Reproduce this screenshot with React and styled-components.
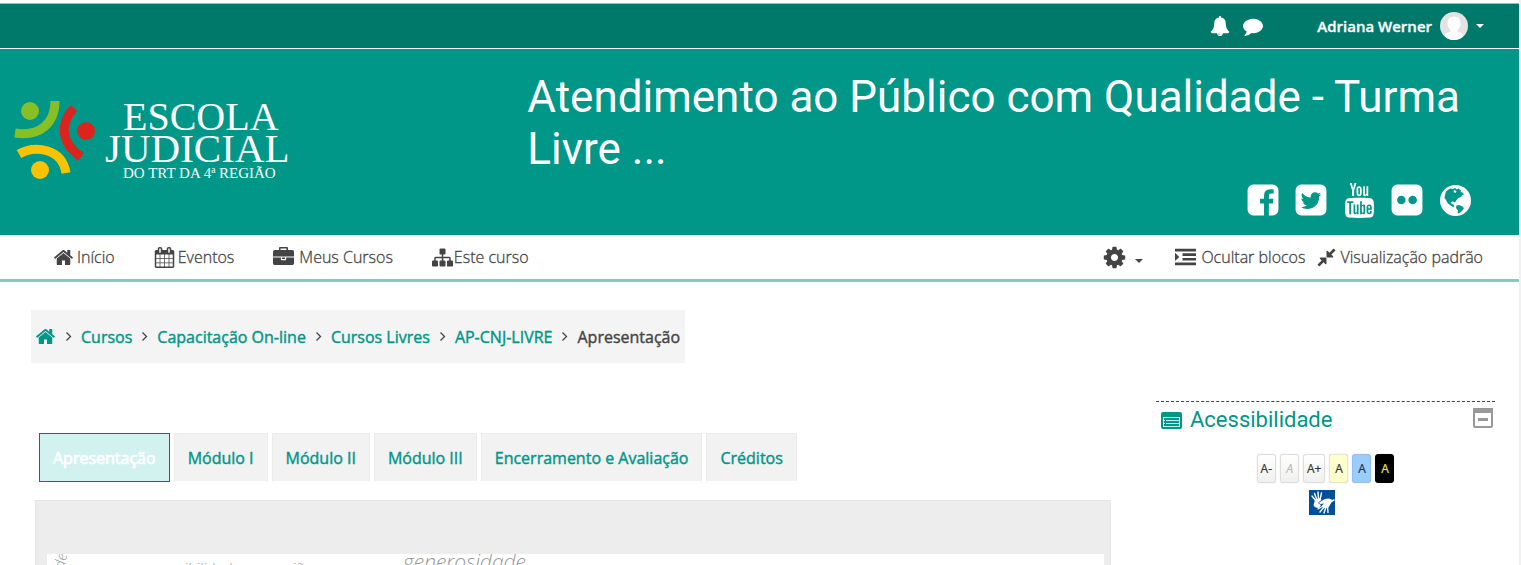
import React from "react";
import styled, { createGlobalStyle } from "styled-components";
import { TfiYoutube } from "react-icons/tfi";

const GlobalStyle = createGlobalStyle`
  * {
    box-sizing: border-box;
  }

  body {
    margin: 0;
    background: #fff;
    color: #444;
    font-family: "Open Sans", sans-serif;
    font-size: 16px;
    overflow: hidden;
  }

  a {
    color: inherit;
    text-decoration: none;
  }

  button {
    border: 0;
    padding: 0;
    background: none;
    color: inherit;
    font: inherit;
    cursor: pointer;
  }
`;

const icons = {
  bell:
    "M912 1696q0-16-16-16-59 0-101.5-42.5t-42.5-101.5q0-16-16-16t-16 16q0 73 51.5 124.5t124.5 51.5q16 0 16-16zm816-288q0 52-38 90t-90 38h-448q0 106-75 181t-181 75-181-75-75-181h-448q-52 0-90-38t-38-90q50-42 91-88t85-119.5 74.5-158.5 50-206 19.5-260q0-152 117-282.5t307-158.5q-8-19-8-39 0-40 28-68t68-28 68 28 28 68q0 20-8 39 190 28 307 158.5t117 282.5q0 139 19.5 260t50 206 74.5 158.5 85 119.5 91 88z",
  comment:
    "M1792 896q0 174-120 321.5t-326 233-450 85.5q-70 0-145-8-198 175-460 242-49 14-114 22-17 2-30.5-9t-17.5-29v-1q-3-4-.5-12t2-10 4.500-9.500l6-9 7-8.500 8-9q7-8 31-34.500t34.500-38 31-39.500 32.500-51 27-59 26-76q-157-89-247.500-220t-90.500-281q0-130 71-248.500t191-204.500 286-136.500 348-50.500q244 0 450 85.500t326 233 120 321.500z",
  facebook:
    "M1376 128q119 0 203.500 84.500t84.500 203.500v960q0 119-84.500 203.500t-203.500 84.500h-188v-595h199l30-232h-229v-148q0-56 23.500-84t91.500-28l122-1v-207q-63-9-178-9-136 0-217.500 80t-81.500 226v171h-200v232h200v595h-532q-119 0-203.500-84.500t-84.500-203.500v-960q0-119 84.500-203.500t203.500-84.500h960z",
  twitter:
    "M1408 610q-56 25-121 34 68-40 93-117-65 38-134 51-61-66-153-66-87 0-148.500 61.500t-61.500 148.500q0 29 5 48-129-7-242-65t-192-155q-29 50-29 106 0 114 91 175-47-1-100-26v2q0 75 50 133.500t123 72.500q-29 8-51 8-13 0-39-4 21 63 74.500 104t121.500 42q-116 90-261 90-26 0-50-3 148 94 322 94 112 0 210-35.500t168-95 120.500-137 75-162 24.500-168.500q0-18-1-27 63-45 105-109zm256-194v960q0 119-84.500 203.500t-203.500 84.500h-960q-119 0-203.500-84.500t-84.500-203.500v-960q0-119 84.500-203.500t203.500-84.500h960q119 0 203.500 84.500t84.500 203.500z",
  flickr:
    "M1376 128q119 0 203.500 84.500t84.500 203.500v960q0 119-84.500 203.500t-203.500 84.500h-960q-119 0-203.500-84.500t-84.500-203.500v-960q0-119 84.500-203.500t203.500-84.500h960zm-550 768q0-88-62-150t-150-62-150 62-62 150 62 150 150 62 150-62 62-150zm564 0q0-88-62-150t-150-62-150 62-62 150 62 150 150 62 150-62 62-150z",
  home:
    "M1472 992v480q0 26-19 45t-45 19h-384v-384h-256v384h-384q-26 0-45-19t-19-45v-480q0-1 .5-3t.5-3l575-474 575 474q1 2 1 6zm223-69l-62 74q-8 9-21 11h-3q-13 0-21-7l-692-577-692 577q-12 8-24 7-13-2-21-11l-62-74q-8-10-7-23.500t11-21.500l719-599q32-26 76-26t76 26l244 204v-195q0-14 9-23t23-9h192q14 0 23 9t9 23v408l219 182q10 8 11 21.500t-7 23.500z",
  calendar:
    "M192 1664h288v-288h-288v288zm352 0h320v-288h-320v288zm-352-352h288v-320h-288v320zm352 0h320v-320h-320v320zm-352-384h288v-288h-288v288zm736 736h320v-288h-320v288zm-384-736h320v-288h-320v288zm768 736h288v-288h-288v288zm-384-352h320v-320h-320v320zm-352-864v-288q0-13-9.500-22.500t-22.500-9.500h-64q-13 0-22.500 9.500t-9.500 22.500v288q0 13 9.500 22.500t22.500 9.500h64q13 0 22.500-9.500t9.500-22.500zm736 864h288v-320h-288v320zm-384-384h320v-288h-320v288zm384 0h288v-288h-288v288zm32-480v-288q0-13-9.500-22.500t-22.500-9.500h-64q-13 0-22.500 9.500t-9.500 22.500v288q0 13 9.500 22.500t22.500 9.500h64q13 0 22.500-9.500t9.500-22.500zm384-64v1280q0 52-38 90t-90 38h-1408q-52 0-90-38t-38-90v-1280q0-52 38-90t90-38h128v-96q0-66 47-113t113-47h64q66 0 113 47t47 113v96h384v-96q0-66 47-113t113-47h64q66 0 113 47t47 113v96h128q52 0 90 38t38 90z",
  briefcase:
    "M640 256h512v-128h-512v128zm1152 640v480q0 66-47 113t-113 47h-1472q-66 0-113-47t-47-113v-480h672v160q0 26 19 45t45 19h320q26 0 45-19t19-45v-160h672zm-768 0v128h-256v-128h256zm768-480v384h-1792v-384q0-66 47-113t113-47h352v-160q0-40 28-68t68-28h576q40 0 68 28t28 68v160h352q66 0 113 47t47 113z",
  sitemap:
    "M1792 1248v320q0 40-28 68t-68 28h-320q-40 0-68-28t-28-68v-320q0-40 28-68t68-28h96v-192h-512v192h96q40 0 68 28t28 68v320q0 40-28 68t-68 28h-320q-40 0-68-28t-28-68v-320q0-40 28-68t68-28h96v-192h-512v192h96q40 0 68 28t28 68v320q0 40-28 68t-68 28h-320q-40 0-68-28t-28-68v-320q0-40 28-68t68-28h96v-192q0-52 38-90t90-38h512v-192h-96q-40 0-68-28t-28-68v-320q0-40 28-68t68-28h320q40 0 68 28t28 68v320q0 40-28 68t-68 28h-96v192h512q52 0 90 38t38 90v192h96q40 0 68 28t28 68z",
  cog:
    "M1152 896q0-106-75-181t-181-75-181 75-75 181 75 181 181 75 181-75 75-181zm512-109v222q0 12-8 23t-20 13l-185 28q-19 54-39 91 35 50 107 138 10 12 10 25t-9 23q-27 37-99 108t-94 71q-12 0-26-9l-138-108q-44 23-91 38-16 136-29 186-7 28-36 28h-222q-14 0-24.500-8.500t-11.500-21.500l-28-184q-49-16-90-37l-141 107q-10 9-25 9-14 0-25-11-126-114-165-168-7-10-7-23 0-12 8-23 15-21 51-66.500t54-70.500q-27-50-41-99l-183-27q-13-2-21-12.500t-8-23.500v-222q0-12 8-23t19-13l186-28q14-46 39-92-40-57-107-138-10-12-10-24 0-10 9-23 26-36 98.500-107.500t94.500-71.500q13 0 26 10l138 107q44-23 91-38 16-136 29-186 7-28 36-28h222q14 0 24.500 8.500t11.500 21.500l28 184q49 16 90 37l142-107q9-9 24-9 13 0 25 10 129 119 165 170 7 8 7 22 0 12-8 23-15 21-51 66.500t-54 70.500q26 50 41 98l183 28q13 2 21 12.500t8 23.500z",
  indent:
    "M0 150h1792v230h-1792zM640 540h1152v230h-1152zM640 930h1152v230h-1152zM0 1320h1792v230h-1792zM0 500l370 350-370 350z",
  compress:
    "M896 960v448q0 26-19 45t-45 19-45-19l-144-144-332 332q-10 10-23 10t-23-10l-114-114q-10-10-10-23t10-23l332-332-144-144q-19-19-19-45t19-45 45-19h448q26 0 45 19t19 45zm755-672q0 13-10 23l-332 332 144 144q19 19 19 45t-19 45-45 19h-448q-26 0-45-19t-19-45v-448q0-26 19-45t45-19 45 19l144 144 332-332q10-10 23-10t23 10l114 114q10 10 10 23z"
};

const Svg = styled.svg`
  width: ${props => props.$size}px;
  height: ${props => props.$size}px;
  flex: none;
  display: block;
  fill: currentColor;
`;

const Icon = ({ name, size = 21 }) => (
  <Svg $size={size} viewBox="0 0 1792 1792" aria-hidden="true">
    <path d={icons[name]} />
  </Svg>
);

const Globe = () => (
  <Svg $size={31} viewBox="0 0 31 31" aria-hidden="true">
    <circle cx="15.500" cy="15.500" r="15.500" />
    <path
      fill="#009688"
      d="M6 6.500l4-3 3 .5 2-1 2 1.500 1.500-1 2.500 2-.5 1.500 2 .5 1.500 2-2 .5-1 2-2.500 1-2 2-1.500 2.500-2-1-2 .5.500 2 2 .5 1 2-1.500.5-3-2-2.500-2-1.500-3-1.500-2 .5-3zM16.500 20.500l2.500-.5 3.500 1.500 1.500 1.500-1.500 2.500-3 2.500-2 .5.500-3-2-2.500z"
    />
    <path d="M14 5l2.500 1-1 2-2-1z" />
  </Svg>
);

const Caret = styled.span`
  border: 4px solid transparent;
  border-top-color: currentColor;
  border-bottom: 0;
`;

const Page = styled.div`
  min-height: 100vh;
  padding-top: 3px;
  border-right: 2px solid #f1f1f1;
`;

const TopBar = styled.div`
  height: 46px;
  display: flex;
  justify-content: flex-end;
  align-items: center;
  padding-right: 35px;
  background: #00796b;
  border-top: 1px solid #a9b5b3;
  border-bottom: 1px solid #fff;
  color: #fff;
`;

const Notices = styled.div`
  display: flex;
  align-items: center;
  gap: 13px;
  margin-right: 54px;
`;

const UserMenu = styled.button`
  display: flex;
  align-items: center;
  gap: 8px;
  font-size: 15px;
  font-weight: 600;
  -webkit-text-stroke: 0.3px currentColor;
`;

const Avatar = styled.svg`
  width: 28px;
  height: 28px;
  border-radius: 50%;
  background: #e3e3e3;
`;

const Header = styled.header`
  display: grid;
  grid-template-columns: 1fr 2fr;
  column-gap: 24px;
  padding: 22px 15px 17px;
  background: #009688;
  color: #fff;
`;

const Logo = styled.svg`
  display: block;
  width: 276px;
  height: 84px;
  margin-top: 29px;
  overflow: visible;
  fill: #fff;
  font-family: "Liberation Serif", serif;
`;

const Title = styled.h1`
  margin: 0;
  font-family: Roboto, sans-serif;
  font-size: 44px;
  font-weight: 400;
  line-height: 52px;
`;

const Social = styled.div`
  display: flex;
  justify-content: flex-end;
  align-items: center;
  gap: 12px;
  margin-top: 7px;
  padding-right: 31px;

  a {
    width: 36px;
    height: 36px;
    display: flex;
    align-items: center;
    justify-content: center;
  }
`;

const NavBar = styled.nav`
  height: 47px;
  display: flex;
  align-items: center;
  padding: 0 36px 0 53px;
  border-bottom: 3px solid #80cbc4;
  font-weight: 300;
  -webkit-text-stroke: 0.3px currentColor;
`;

const NavLink = styled.a`
  display: flex;
  align-items: center;
  gap: ${props => props.$gap || 3}px;
  margin-right: ${props => props.$space || 0}px;
`;

const Settings = styled.button`
  display: flex;
  align-items: center;
  gap: 8px;
  margin: 0 32px 0 auto;

  ${Caret} {
    margin-top: 8px;
  }
`;

const Breadcrumb = styled.nav`
  width: fit-content;
  height: 53px;
  display: flex;
  align-items: center;
  gap: 9px;
  margin: 28px 0 0 31px;
  padding: 0 5px 0 4px;
  background: #f4f4f4;
  -webkit-text-stroke: 0.4px currentColor;

  a {
    color: #009688;
  }
`;

const Chevron = styled.svg`
  width: 7px;
  height: 9px;
  fill: none;
  stroke: #444;
  stroke-width: 1.3;
`;

const Content = styled.div`
  display: grid;
  grid-template-columns: minmax(0, 1fr) 339px;
  column-gap: 45px;
  margin-top: 38px;
  padding: 0 24px 0 35px;
`;

const Tabs = styled.div`
  display: flex;
  gap: 4px;
  margin: 32px 0 0 4px;
`;

const Tab = styled.a`
  height: 49px;
  padding: 0 13px;
  line-height: 49px;
  -webkit-text-stroke: ${props => (props.$active ? 0.7 : 0.4)}px currentColor;
  color: ${props => (props.$active ? "#fff" : "#009688")};
  background: ${props => (props.$active ? "#d2f2ef" : "#f2f2f2")};
  border: 1px solid ${props => (props.$active ? "#00796b" : "#ececec")};
  border-bottom-color: ${props => (props.$active ? "#00796b" : "#fff")};
`;

const Panel = styled.section`
  margin-top: 18px;
  padding: 53px 6px 0 11px;
  background: #ededed;
  border: 1px solid #e6e6e6;
`;

const Banner = styled.svg`
  display: block;
  width: 100%;
  height: 240px;
  background: #fff;
  fill: #999;
  font-family: "Open Sans", sans-serif;
  font-style: italic;
  font-weight: 300;
`;

const Block = styled.aside`
  border-top: 1px dashed #444;
`;

const BlockHeader = styled.div`
  display: flex;
  align-items: center;
  gap: 8px;
  height: 36px;
  padding: 0 2px 0 5px;
  color: #009688;

  h2 {
    flex: 1;
    margin: 0;
    font: 400 22px/36px Roboto, sans-serif;
  }

  button {
    color: #999;
  }
`;

const Sizes = styled.div`
  display: flex;
  justify-content: center;
  gap: 4px;
  margin: 16px 0 7px;
`;

const SizeButton = styled.button`
  height: 29px;
  min-width: 19px;
  padding: 0 3px;
  border: 1px solid ${props => props.$border || "#ddd"};
  border-radius: 3px;
  background: ${props => props.$bg || "linear-gradient(#fff, #f0f0ee)"};
  color: ${props => props.$color || "#333"};
  font-size: 12px;
  font-style: ${props => (props.disabled ? "italic" : "normal")};
  -webkit-text-stroke: 0.2px currentColor;
  box-shadow: 0 0 1px rgba(0, 0, 0, 0.25);
`;

const Hands = styled.button`
  display: block;
  margin: 0 auto;
  padding-right: 8px;
`;

const crumbs = ["Cursos", "Capacitação On-line", "Cursos Livres", "AP-CNJ-LIVRE"];

const tabs = [
  "Apresentação",
  "Módulo I",
  "Módulo II",
  "Módulo III",
  "Encerramento e Avaliação",
  "Créditos"
];

const Separator = () => (
  <Chevron viewBox="0 0 7 9" aria-hidden="true">
    <path d="M1.500 .5l4 4-4 4" />
  </Chevron>
);

const App = () => (
  <>
    <GlobalStyle />
    <Page>
      <TopBar>
        <Notices>
          <button aria-label="Notificações">
            <Icon name="bell" size={20} />
          </button>
          <button aria-label="Mensagens">
            <Icon name="comment" size={20} />
          </button>
        </Notices>
        <UserMenu>
          Adriana Werner
          <Avatar viewBox="0 0 28 28" aria-hidden="true">
            <path
              fill="#fff"
              d="M14 4.500c4 0 6.500 2.800 6.500 6.500 0 3-1.200 5.500-3 6.900v1.600c2 .8 5 1.700 6 3.500L21 28H7l-2.500-5c1-1.800 4-2.700 6-3.500v-1.600c-1.800-1.400-3-3.900-3-6.900 0-3.700 2.500-6.500 6.500-6.500z"
            />
          </Avatar>
          <Caret />
        </UserMenu>
      </TopBar>

      <Header>
        <a href="#inicio" aria-label="Escola Judicial do TRT da 4ª Região">
          <Logo viewBox="0 0 276 84">
            <g fill="none" strokeWidth="9">
              <path stroke="#86bf26" d="M40 1c0 22-15 36-40 32" />
              <path stroke="#dc241f" d="M59 8c-14 15-14 34 7 49" />
              <path stroke="#f9c300" d="M4 54c16-9 43-6 47 19" />
            </g>
            <circle fill="#86bf26" cx="15" cy="11" r="9" />
            <circle fill="#dc241f" cx="71" cy="31" r="9" />
            <circle fill="#f9c300" cx="25" cy="70" r="9" />
            <text x="108" y="30" fontSize="40">
              ESCOLA
            </text>
            <text x="90" y="62" fontSize="41">
              JUDICIAL
            </text>
            <text x="108" y="78" fontSize="15">
              DO TRT DA 4ª REGIÃO
            </text>
          </Logo>
        </a>
        <div>
          <Title>Atendimento ao Público com Qualidade - Turma Livre ...</Title>
          <Social>
            <a href="#facebook" aria-label="Facebook">
              <Icon name="facebook" size={36} />
            </a>
            <a href="#twitter" aria-label="Twitter">
              <Icon name="twitter" size={36} />
            </a>
            <a href="#youtube" aria-label="YouTube">
              <TfiYoutube size={35} />
            </a>
            <a href="#flickr" aria-label="Flickr">
              <Icon name="flickr" size={36} />
            </a>
            <a href="#site" aria-label="Site">
              <Globe />
            </a>
          </Social>
        </div>
      </Header>

      <NavBar>
        <NavLink href="#inicio" $space={39}>
          <Icon name="home" />
          Início
        </NavLink>
        <NavLink href="#eventos" $space={39}>
          <Icon name="calendar" />
          Eventos
        </NavLink>
        <NavLink href="#cursos" $gap={5} $space={39}>
          <Icon name="briefcase" />
          Meus Cursos
        </NavLink>
        <NavLink href="#curso" $gap={1}>
          <Icon name="sitemap" />
          Este curso
        </NavLink>
        <Settings aria-label="Configurações">
          <Icon name="cog" size={25} />
          <Caret />
        </Settings>
        <NavLink href="#blocos" $gap={5} $space={11}>
          <Icon name="indent" />
          Ocultar blocos
        </NavLink>
        <NavLink href="#padrao">
          <Icon name="compress" />
          Visualização padrão
        </NavLink>
      </NavBar>

      <Breadcrumb aria-label="Navegação">
        <a href="#inicio" aria-label="Início">
          <Icon name="home" />
        </a>
        {crumbs.map(crumb => (
          <React.Fragment key={crumb}>
            <Separator />
            <a href="#curso">{crumb}</a>
          </React.Fragment>
        ))}
        <Separator />
        <span>Apresentação</span>
      </Breadcrumb>

      <Content>
        <main>
          <Tabs>
            {tabs.map((tab, i) => (
              <Tab key={tab} href="#modulo" $active={i === 0}>
                {tab}
              </Tab>
            ))}
          </Tabs>
          <Panel>
            <Banner>
              <text x="356" y="15" fontSize="21">
                generosidade
              </text>
              <text x="108" y="20" fontSize="15">
                sensibilidade
              </text>
              <text x="228" y="20" fontSize="15">
                união
              </text>
              <text transform="translate(16 24) rotate(-80)" fontSize="15">
                ade
              </text>
            </Banner>
          </Panel>
        </main>

        <Block>
          <BlockHeader>
            <svg width="21" height="17" viewBox="0 0 21 17" aria-hidden="true">
              <rect width="21" height="17" rx="2" fill="#009688" />
              <path
                stroke="#fff"
                strokeOpacity="0.8"
                d="M2 5.500h17M2 8.500h2M5 8.500h14M2 11.500h2M5 11.500h14M2 14.500h17M2.500 5v10M18.500 5v10"
              />
            </svg>
            <h2>Acessibilidade</h2>
            <button aria-label="Recolher bloco">
              <svg width="20" height="20" viewBox="0 0 20 20">
                <rect x="1" y="1" width="18" height="18" rx="1" fill="none" stroke="#999" strokeWidth="2" />
                <path fill="#999" d="M0 0h20v5H0zM5 10h10v3H5z" />
              </svg>
            </button>
          </BlockHeader>
          <Sizes>
            <SizeButton>A-</SizeButton>
            <SizeButton disabled $color="#bbb">
              A
            </SizeButton>
            <SizeButton>A+</SizeButton>
            <SizeButton $bg="#ffffcc" $border="#e8e8c0">
              A
            </SizeButton>
            <SizeButton $bg="#99ccff" $border="#90c0f0" $color="#234">
              A
            </SizeButton>
            <SizeButton $bg="#000" $border="#000" $color="#ee3">
              A
            </SizeButton>
          </Sizes>
          <Hands aria-label="Libras">
            <svg width="26" height="25" viewBox="0 0 26 25">
              <rect width="26" height="25" fill="#004f98" />
              <g fill="none" stroke="#fff" strokeWidth="1.400" strokeLinecap="round">
                <path d="M7 11L3 6M8 10L5.500 3.500M9.500 9L9 2M11 10l1.500-7" />
                <path d="M14 16l-5 3M15 17l-4 5M17 17l-2 6M18.500 16.500l.5 6M23 11l2-1" />
              </g>
              <path fill="#fff" d="M6 10l5-2 1.500 1.500L9 13l3 2-2 3c-3 0-5-1-5.500-3z" />
              <path fill="#fff" d="M10 12.500l5-3c4-2 8-1 8.500 1.500l-2 3-2 3.500-4 .5-2.500-2.500 2-2-4 .5z" />
            </svg>
          </Hands>
        </Block>
      </Content>
    </Page>
  </>
);

export default App;
